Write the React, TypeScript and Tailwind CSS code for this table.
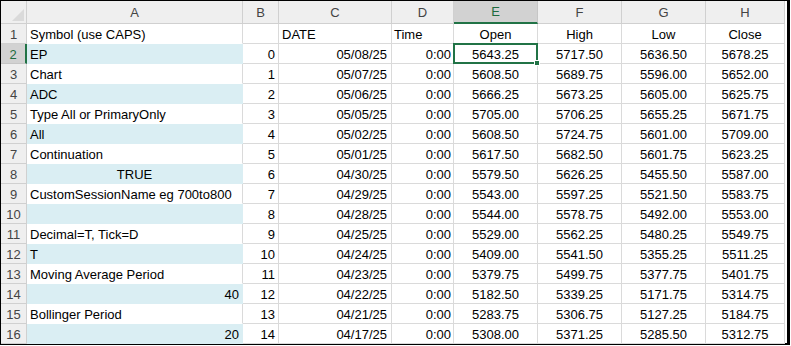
import React from "react";

const cols = ["A", "B", "C", "D", "E", "F", "G", "H"];

type Row = {
  a: string;
  align?: "left" | "center" | "right";
  b: string;
  c: string;
  d: string;
  prices: string[];
};

const rows: Row[] = [
  { a: "EP", b: "0", c: "05/08/25", d: "0:00", prices: ["5643.25", "5717.50", "5636.50", "5678.25"] },
  { a: "Chart", b: "1", c: "05/07/25", d: "0:00", prices: ["5608.50", "5689.75", "5596.00", "5652.00"] },
  { a: "ADC", b: "2", c: "05/06/25", d: "0:00", prices: ["5666.25", "5673.25", "5605.00", "5625.75"] },
  { a: "Type All or PrimaryOnly", b: "3", c: "05/05/25", d: "0:00", prices: ["5705.00", "5706.25", "5655.25", "5671.75"] },
  { a: "All", b: "4", c: "05/02/25", d: "0:00", prices: ["5608.50", "5724.75", "5601.00", "5709.00"] },
  { a: "Continuation", b: "5", c: "05/01/25", d: "0:00", prices: ["5617.50", "5682.50", "5601.75", "5623.25"] },
  { a: "TRUE", align: "center", b: "6", c: "04/30/25", d: "0:00", prices: ["5579.50", "5626.25", "5455.50", "5587.00"] },
  { a: "CustomSessionName eg 700to800", b: "7", c: "04/29/25", d: "0:00", prices: ["5543.00", "5597.25", "5521.50", "5583.75"] },
  { a: "", b: "8", c: "04/28/25", d: "0:00", prices: ["5544.00", "5578.75", "5492.00", "5553.00"] },
  { a: "Decimal=T, Tick=D", b: "9", c: "04/25/25", d: "0:00", prices: ["5529.00", "5562.25", "5480.25", "5549.75"] },
  { a: "T", b: "10", c: "04/24/25", d: "0:00", prices: ["5409.00", "5541.50", "5355.25", "5511.25"] },
  { a: "Moving Average Period", b: "11", c: "04/23/25", d: "0:00", prices: ["5379.75", "5499.75", "5377.75", "5401.75"] },
  { a: "40", align: "right", b: "12", c: "04/22/25", d: "0:00", prices: ["5182.50", "5339.25", "5171.75", "5314.75"] },
  { a: "Bollinger Period", b: "13", c: "04/21/25", d: "0:00", prices: ["5283.75", "5306.75", "5127.25", "5184.75"] },
  { a: "20", align: "right", b: "14", c: "04/17/25", d: "0:00", prices: ["5308.00", "5371.25", "5285.50", "5312.75"] },
];

const cell = "h-[20px] border-r border-b border-[#dadada] flex items-center pt-[2px] whitespace-nowrap overflow-hidden";
const grid = "grid grid-cols-[26px_216px_36px_113px_62px_84px_84px_84px_79px]";

export default function App() {
  return (
    <div
      className="w-[791px] h-[346px] bg-white text-[13px] text-black overflow-hidden"
      style={{ fontFamily: '"Liberation Sans", Arial, sans-serif' }}
    >
      <div className="w-[790px] h-[345px] border-t border-l-[1px] border-r-[3px] border-b-[2px] border-black flex">
        <div className="w-[785px]">
          {/* column headers */}
          <div className={grid}>
            <div className="h-[23px] bg-[#efefef] border-r border-b border-[#d0d0d0] relative">
              <div className="absolute right-[2px] bottom-[2px] w-0 h-0 border-l-[12px] border-l-transparent border-b-[12px] border-b-[#dadada]" />
            </div>
            {cols.map((c) =>
              c === "E" ? (
                <div
                  key={c}
                  className="h-[23px] bg-[#d2d2d2] border-r border-[#c6c6c6] border-b-2 border-b-[#217346] flex items-center justify-center text-[#1e6b3f] pt-[1px]"
                >
                  {c}
                </div>
              ) : (
                <div
                  key={c}
                  className="h-[23px] bg-[#efefef] border-r border-b border-[#d0d0d0] flex items-center justify-center text-[#444444] pt-[1px]"
                >
                  {c}
                </div>
              )
            )}
          </div>

          {/* row 1 */}
          <div className={grid}>
            <div className="h-[20px] bg-[#efefef] border-r border-b border-[#d0d0d0] flex items-center justify-center text-[#444444] pt-[2px]">1</div>
            <div className={`${cell} pl-[3px] border-b-white`}>Symbol (use CAPS)</div>
            <div className={cell} />
            <div className={`${cell} pl-[3px]`}>DATE</div>
            <div className={`${cell} pl-[2px]`}>Time</div>
            <div className={`${cell} justify-center`}>Open</div>
            <div className={`${cell} justify-center`}>High</div>
            <div className={`${cell} justify-center`}>Low</div>
            <div className={`${cell} justify-center`}>Close</div>
          </div>

          {rows.map((r, i) => {
            const n = i + 2;
            const blue = n % 2 === 0;
            const selected = n === 2;
            const align =
              r.align === "center" ? "justify-center" : r.align === "right" ? "justify-end pr-[3px]" : "pl-[3px]";
            return (
              <div key={n} className={grid}>
                {selected ? (
                  <div className="h-[20px] bg-[#d2d2d2] border-b border-[#c6c6c6] border-r-2 border-r-[#217346] flex items-center justify-center text-[#1e6b3f] pt-[2px]">
                    {n}
                  </div>
                ) : (
                  <div className="h-[20px] bg-[#efefef] border-r border-b border-[#d0d0d0] flex items-center justify-center text-[#444444] pt-[2px]">
                    {n}
                  </div>
                )}
                <div
                  className={`${cell} ${align} ${
                    blue ? "bg-[#daeef3] border-[#daeef3]" : "border-b-white"
                  }`}
                >
                  {r.a}
                </div>
                <div className={`${cell} justify-end pr-[3px]`}>{r.b}</div>
                <div className={`${cell} justify-end pr-[4px]`}>{r.c}</div>
                <div className={`${cell} justify-end pr-[2px]`}>{r.d}</div>
                {r.prices.map((p, j) => (
                  <div
                    key={j}
                    className={`${cell} justify-center relative ${selected && j === 0 ? "overflow-visible z-10" : ""}`}
                  >
                    {p}
                    {selected && j === 0 && (
                      <div className="absolute left-[-1px] top-[-1px] w-[85px] h-[21px] border-2 border-[#217346]">
                        <div className="absolute right-[-4px] bottom-[-4px] w-[6px] h-[6px] bg-[#217346] border border-white" />
                      </div>
                    )}
                  </div>
                ))}
              </div>
            );
          })}
        </div>
      </div>
    </div>
  );
}
